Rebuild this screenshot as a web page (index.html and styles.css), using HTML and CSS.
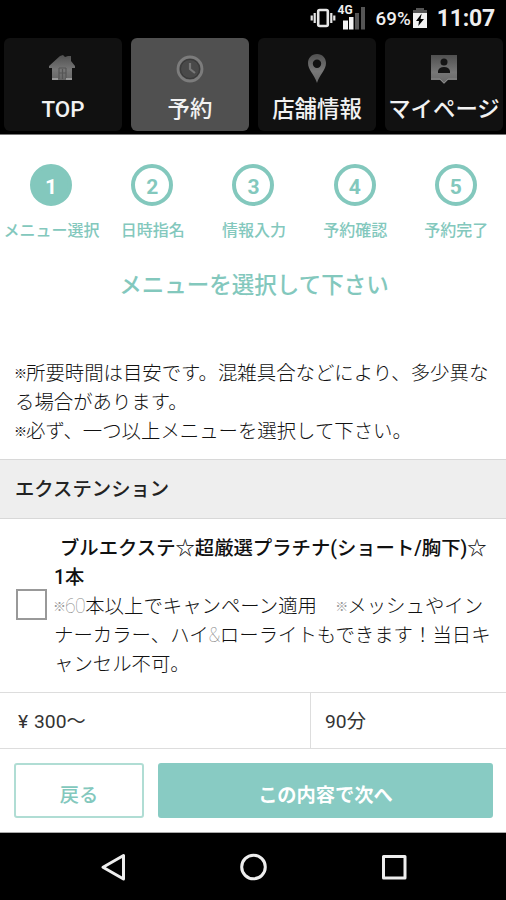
FILE: index.html
```html
<!DOCTYPE html>
<html lang="ja">
<head>
<meta charset="utf-8">
<title>メニュー選択</title>
<link rel="stylesheet" href="styles.css">
</head>
<body>
<div class="status">
  <svg class="status-vibrate" width="26" height="22" viewBox="0 0 26 22"><rect x="8.200" y="3" width="9.600" height="16" rx="1.500" fill="none" stroke="#e6e6e6" stroke-width="2.600"/><path d="M4.700 6v10M1.700 8.500v5M21.300 6v10M24.300 8.500v5" stroke="#e6e6e6" stroke-width="2.200"/></svg>
  <div class="network"><span class="network-type">4G</span><svg width="27" height="26" viewBox="0 0 27 26"><path d="M4 15.500h5v9H4zM10 12h4.500v12.500H10z" fill="#f2f2f2"/><path d="M16 8h4v16.500h-4zM22 2h4v22.500h-4z" fill="#555"/></svg></div>
  <span class="percent">69%</span>
  <svg class="battery" width="16" height="22" viewBox="0 0 16 22"><path d="M4 1h8v3H4zM1 3h14v4H1z" fill="#555"/><path d="M1 6h14v15H1z" fill="#f2f2f2"/><path d="M9.700 6.500L4 14h3l-.7 5 5.700-7H8.500z" fill="#000"/></svg>
  <span class="clock">11:07</span>
</div>
<nav class="tabs">
  <svg width="0" height="0" class="defs"><defs><linearGradient id="metal" x1="0" y1="0" x2="0" y2="1"><stop offset="0" stop-color="#505050"/><stop offset=".6" stop-color="#777"/><stop offset="1" stop-color="#666"/></linearGradient></defs></svg>
  <div class="tab"><svg width="30" height="32" viewBox="0 0 30 32"><path d="M15 2l2 2 3-1h3v5l4 5v2h-3v12H4V15H1v-2L12 3z" fill="url(#metal)"/><path d="M11 15h7M11 15v11M18 15v11M14.500 16v10M11 20h7" stroke="#555" stroke-width="1.200"/><path d="M4 26h6M18 26h6" stroke="#999" stroke-width="2"/></svg><span>TOP</span></div>
  <div class="tab active"><svg width="30" height="32" viewBox="0 0 30 32"><circle cx="15" cy="16" r="12" fill="#444" stroke="#7c7c7c" stroke-width="2.800"/><circle cx="15" cy="16" r="9.500" fill="#494949" stroke="#383838"/><path d="M15 10v6l5 4" fill="none" stroke="#777" stroke-width="2.200"/></svg><span>予約</span></div>
  <div class="tab"><svg width="30" height="32" viewBox="0 0 30 32"><path fill="url(#metal)" fill-rule="evenodd" d="M15 1c5.500 0 9 4 9 9 0 7-6 11-9 20C12 21 6 17 6 10c0-5 3.500-9 9-9zm0 5.500a4.200 4.200 0 100 8.400 4.200 4.200 0 000-8.400z"/></svg><span>店舗情報</span></div>
  <div class="tab"><svg width="30" height="32" viewBox="0 0 30 32"><path d="M2 2h26v25h-9l-4 4-4-4H2z" fill="url(#metal)"/><circle cx="15" cy="9" r="3.500" fill="#151515"/><path d="M9 20v-2q1-4 6-4t6 4v2z" fill="#151515"/><path d="M2 26h9l4 4 4-4h9" fill="none" stroke="#888"/></svg><span>マイページ</span></div>
</nav>
<main>
  <ol class="steps">
    <li><b class="num current">1</b><span>メニュー選択</span></li>
    <li><b class="num">2</b><span>日時指名</span></li>
    <li><b class="num">3</b><span>情報入力</span></li>
    <li><b class="num">4</b><span>予約確認</span></li>
    <li><b class="num">5</b><span>予約完了</span></li>
  </ol>
  <h1>メニューを選択して下さい</h1>
  <p class="notes"><i class="mark">※</i>所要時間は目安です。混雑具合などにより、多少異な<br>る場合があります。<br><i class="mark">※</i>必ず、一つ以上メニューを選択して下さい。</p>
  <h2>エクステンション</h2>
  <div class="item">
    <span class="checkbox"></span>
    <div class="item-text">
      <h3><span class="name">ブルエクステ☆超厳選プラチナ(ショート/胸下)☆</span><br>1本</h3>
      <p><i class="mark faint">※</i><span class="thin">60</span>本以上でキャンペーン適用　<i class="mark faint">※</i>メッシュやイン<br>ナーカラー、ハイ<span class="thin">&amp;</span>ローライトもできます！当日キ<br>ャンセル不可。</p>
    </div>
  </div>
  <div class="details"><div class="price"><span class="yen">¥</span>300<span class="wave">〜</span></div><div class="time">90分</div></div>
  <div class="actions"><button class="back">戻る</button><button class="next">この内容で次へ</button></div>
</main>
<footer class="system">
  <svg width="506" height="67" viewBox="0 0 506 67" fill="none" stroke="#eee" stroke-width="3" stroke-linejoin="round"><path d="M123.500 22.500v23.500L103 34.200z"/><circle cx="253.500" cy="34" r="11.800"/><rect x="383.500" y="23.500" width="21.500" height="21.500"/></svg>
</footer>
</body>
</html>
```
FILE: styles.css
```css
* { box-sizing: border-box; }
body { margin: 0; width: 506px; height: 900px; overflow: hidden; background: #fff; color: #333; font-family: Roboto, "Noto Sans CJK JP", sans-serif; display: flex; flex-direction: column; }
h1, h2, h3, p, ol { margin: 0; padding: 0; }
.status { height: 38px; flex: none; background: #000; color: #eee; display: flex; align-items: center; justify-content: flex-end; padding: 0 12px 3px 0; }
.status-vibrate { margin-right: 3px; }
.network { position: relative; width: 27px; height: 26px; margin-right: 10px; }
.network-type { position: absolute; left: -1px; top: -1px; font: 700 12px/12px Roboto, sans-serif; }
.percent { font-size: 18.800px; font-weight: 500; line-height: 20px; padding-top: 2px; margin-right: 1px; }
.battery { margin-right: 9px; }
.clock { font-size: 23px; line-height: 24px; padding-top: 2px; font-weight: 700; letter-spacing: -.2px; margin-right: -1px; }
.tabs { position: relative; height: 97px; flex: none; background: #000; border-bottom: 1px solid #777; display: flex; gap: 9px; padding: 0 3px 3px 4px; }
.defs { position: absolute; }
.tab { flex: 1 1 0; min-width: 0; height: 93px; border-radius: 6px; background: #111; color: #f2f2f2; display: flex; flex-direction: column; align-items: center; padding-top: 15px; font-size: 22.400px; font-weight: 500; }
.tab.active { background: #505050; }
.tab svg { flex: none; }
.tab span { margin-top: 7px; line-height: 34px; white-space: nowrap; }
main { height: 698px; flex: none; border-bottom: 1px solid #aaa; display: flex; flex-direction: column; }
.steps { list-style: none; display: grid; grid-template-columns: repeat(5, 101.200px); height: 114px; padding: 29px 0 0 1px; color: #83c8bd; }
.steps li { display: flex; flex-direction: column; align-items: center; font-size: 16px; line-height: 24px; font-weight: 500; }
.num { width: 42px; height: 42px; border: 4px solid #83c8bd; border-radius: 50%; text-align: center; font-size: 21px; line-height: 38px; font-weight: 700; margin: 0 1px 13px 0; }
.num.current { background: #83c8bd; color: #fff; }
h1 { height: 70px; padding: 19px 0 0 2px; text-align: center; font-size: 22.500px; line-height: 34px; font-weight: 500; color: #83c8bd; }
.notes { height: 140px; padding: 40px 0 0 15px; font-size: 19.400px; line-height: 29px; font-weight: 300; color: #111; white-space: nowrap; }
.mark { display: inline-block; width: 12px; font-size: 13px; font-style: normal; line-height: 1; vertical-align: 2px; margin-left: -1px; }
h2 { height: 60px; background: #eee; border: solid #d8d8d8; border-width: 1px 0; padding-left: 15px; font-size: 19.350px; line-height: 59px; font-weight: 500; color: #222; }
.item { height: 174px; display: flex; align-items: center; padding-left: 16px; border-bottom: 1px solid #ddd; white-space: nowrap; }
.checkbox { width: 31px; height: 31px; border: 2px solid #999; margin: 0 7px 2px 0; }
.item-text { font-size: 19.400px; line-height: 29px; font-weight: 300; color: #111; padding-top: 1px; }
.item-text h3 { font-size: 19.350px; line-height: 29px; font-weight: 500; color: #111; }
.name { margin-left: 6px; }
.thin { font-weight: 100; color: #888; letter-spacing: -.5px; }
.faint { color: #999; }
.details { height: 56px; display: grid; grid-template-columns: 311px 1fr; grid-template-rows: 55px; border-bottom: 1px solid #ddd; font-size: 19.250px; line-height: 57px; }
.price { border-right: 1px solid #ddd; padding-left: 18px; }
.yen { display: inline-block; width: 16px; }
.time { padding-left: 14px; }
.actions { flex: 1; padding: 14px 13px 14px 14px; display: flex; gap: 14px; }
.actions button { font-family: inherit; font-size: 19.250px; line-height: 28px; font-weight: 500; border-radius: 3px; border: 2px solid #b0ddd4; padding: 10px 0 0; }
.back { width: 130px; background: #fff; color: #83c8bd; }
.actions .next { flex: 1; background: #88cbc3; color: #fff; border-color: #88cbc3; font-weight: 700; }
.system { height: 67px; background: #000; }
.system svg { display: block; }
```
